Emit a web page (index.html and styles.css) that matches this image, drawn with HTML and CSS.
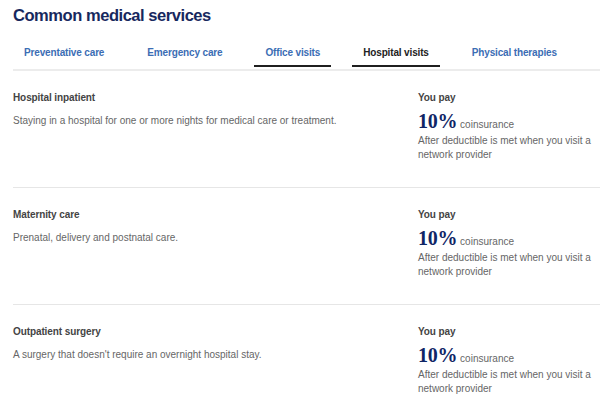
FILE: index.html
```html
<!DOCTYPE html>
<html lang="en">
<head>
<meta charset="utf-8">
<title>Common medical services</title>
<link rel="stylesheet" href="styles.css">
</head>
<body>
<main class="page">
  <h1 class="title">Common medical services</h1>
  <nav class="tabs">
    <a class="tab">Preventative care</a>
    <a class="tab">Emergency care</a>
    <a class="tab tab-hover">Office visits</a>
    <a class="tab tab-active">Hospital visits</a>
    <a class="tab">Physical therapies</a>
  </nav>
  <section class="services">
    <article class="service">
      <div class="service-info">
        <h2 class="service-name">Hospital inpatient</h2>
        <p class="service-desc">Staying in a hospital for one or more nights for medical care or treatment.</p>
      </div>
      <div class="cost">
        <div class="cost-label">You pay</div>
        <div class="cost-amount"><span class="pct">10%</span><span class="unit">coinsurance</span></div>
        <p class="cost-note">After deductible is met when you visit a network provider</p>
      </div>
    </article>
    <article class="service">
      <div class="service-info">
        <h2 class="service-name">Maternity care</h2>
        <p class="service-desc">Prenatal, delivery and postnatal care.</p>
      </div>
      <div class="cost">
        <div class="cost-label">You pay</div>
        <div class="cost-amount"><span class="pct">10%</span><span class="unit">coinsurance</span></div>
        <p class="cost-note">After deductible is met when you visit a network provider</p>
      </div>
    </article>
    <article class="service">
      <div class="service-info">
        <h2 class="service-name">Outpatient surgery</h2>
        <p class="service-desc">A surgery that doesn't require an overnight hospital stay.</p>
      </div>
      <div class="cost">
        <div class="cost-label">You pay</div>
        <div class="cost-amount"><span class="pct">10%</span><span class="unit">coinsurance</span></div>
        <p class="cost-note">After deductible is met when you visit a network provider</p>
      </div>
    </article>
  </section>
</main>
</body>
</html>
```
FILE: styles.css
```css
* { box-sizing: border-box; }
html, body { margin: 0; padding: 0; background: #fff; }
body {
  font-family: "Liberation Sans", Arial, sans-serif;
  color: #444;
}
.page {
  padding: 5px 0 0 13px;
}
.title {
  margin: 0;
  font-size: 16.5px;
  line-height: 20px;
  letter-spacing: -0.45px;
  font-weight: 700;
  color: #17285e;
}
.tabs {
  display: flex;
  gap: 21px;
  margin-top: 21px;
  padding-bottom: 2px;
  border-bottom: 2px solid #ececec;
}
.tab {
  display: block;
  padding: 0 11px 5px;
  font-size: 10px;
  line-height: 14px;
  font-weight: 700;
  letter-spacing: -0.15px;
  color: #3b6db4;
  border-bottom: 2px solid transparent;
}
.tab-hover { border-bottom-color: #1f1f1f; }
.tab-active { color: #222; border-bottom-color: #1f1f1f; }
.service {
  display: grid;
  grid-template-columns: 1fr 182px;
  padding: 20px 0 25px;
  border-bottom: 1px solid #e6e6e6;
}
.service-name,
.cost-label {
  margin: 0;
  font-size: 10px;
  line-height: 14px;
  font-weight: 700;
  letter-spacing: -0.1px;
  color: #444;
}
.service-desc {
  margin: 9px 0 0;
  font-size: 10px;
  line-height: 14px;
  color: #666;
}
.cost-amount {
  display: flex;
  align-items: baseline;
  gap: 3px;
  height: 21px;
  margin-top: 6px;
}
.pct {
  font-family: "Liberation Serif", "Times New Roman", serif;
  font-size: 20px;
  line-height: 20px;
  font-weight: 700;
  color: #0f2666;
  letter-spacing: -0.3px;
}
.unit {
  font-size: 10px;
  line-height: 14px;
  color: #666;
}
.cost-note {
  margin: 2px 0 0;
  font-size: 10px;
  line-height: 14px;
  color: #666;
}
```
